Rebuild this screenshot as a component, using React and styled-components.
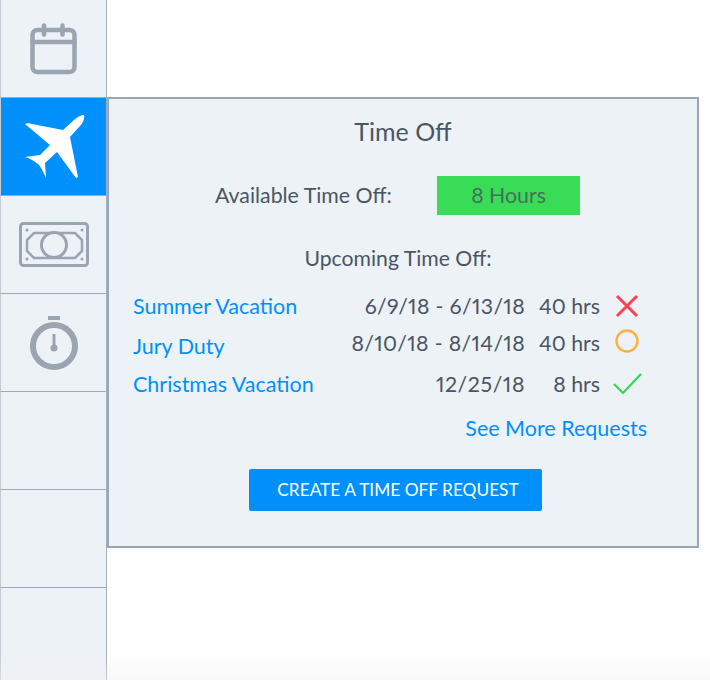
import React from "react";
import styled, { createGlobalStyle } from "styled-components";

const Global = createGlobalStyle`
  html, body { margin: 0; padding: 0; background: #fff; }
  body { font-family: Lato, "Open Sans", sans-serif; color: #4a5565; font-variant-numeric: proportional-nums; }
`;

const Page = styled.div`
  position: relative;
  width: 710px;
  height: 680px;
  overflow: hidden;
  display: flex;
  align-items: flex-start;
  padding-left: 1px;
  box-sizing: border-box;
`;
const Fade = styled.div`
  position: absolute;
  left: 0;
  right: 0;
  bottom: 0;
  height: 26px;
  background: linear-gradient(to bottom, rgba(240,240,240,0), rgba(240,240,240,0.45));
  pointer-events: none;
`;
const Sidebar = styled.nav`
  width: 106px;
  display: flex;
  flex-direction: column;
  box-sizing: border-box;
  flex: none;
`;
const Tab = styled.div`
  height: 98px;
  box-sizing: border-box;
  display: flex;
  align-items: center;
  justify-content: center;
  background: ${p => (p.$active ? "#0090fb" : "#edf2f7")};
  border-right: 1px solid #a5aebb;
  border-left: 1px solid #c5ccd5;
  border-bottom: 1px solid #a0a9b7;
  color: ${p => (p.$active ? "#fff" : "#9ba4b0")};
  margin-left: -1px;
  width: 107px;
`;
const Panel = styled.section`
  margin-top: 97px;
  width: 592px;
  height: 451px;
  box-sizing: border-box;
  background: #edf2f7;
  border: 2px solid #9aa6b8;
  display: flex;
  flex-direction: column;
  align-items: stretch;
  padding: 16px 49px 0 24px;
`;
const Title = styled.h2`
  margin: 0;
  font-size: 25px;
  font-weight: 400;
  line-height: 32px;
  text-align: center;
  padding-left: 25px;
`;
const AvailableRow = styled.div`
  display: flex;
  align-items: center;
  margin-top: 29px;
  padding-left: 82px;
  font-size: 21.3px;
`;
const AvailableLabel = styled.span`
  width: 222px;
  padding-bottom: 2px;
`;
const Hours = styled.div`
  width: 143px;
  height: 39px;
  box-sizing: border-box;
  padding-bottom: 2px;
  background: #39dc56;
  color: #47705a;
  display: flex;
  align-items: center;
  justify-content: center;
`;
const Upcoming = styled.div`
  margin-top: 30px;
  text-align: center;
  font-size: 21.2px;
  line-height: 26px;
  padding-left: 15px;
`;
const Requests = styled.div`
  margin-top: 16px;
  display: flex;
  flex-direction: column;
`;
const Request = styled.div`
  display: grid;
  grid-template-columns: 1fr auto 75px 48px;
  align-items: center;
  height: ${p => p.$h}px;
  font-size: 21.3px;
`;
const Name = styled.a`
  color: #0090fb;
  font-size: 21.5px;
  transform: translateY(${p => p.$dy || 0}px);
`;
const Dates = styled.span`
  text-align: right;
  letter-spacing: ${p => p.$track}px;
`;
const Hrs = styled.span`
  text-align: right;
`;
const Status = styled.span`
  display: flex;
  justify-content: center;
  padding-left: 6px;
  transform: translateY(${p => p.$dy || 0}px);
`;
const More = styled.a`
  align-self: flex-end;
  color: #0090fb;
  font-size: 21.5px;
  line-height: 26px;
  margin: 8px 1px 0 0;
`;
const Cta = styled.button`
  align-self: center;
  margin: 28px 0 0 9px;
  width: 293px;
  height: 42px;
  border: 0;
  padding: 0 0 2px 6px;
  border-radius: 2px;
  background: #0090fb;
  color: #fff;
  font: 400 17.3px Lato, sans-serif;
`;

const Calendar = () => (
  <svg width="48" height="52" viewBox="0 0 48 52" fill="none" stroke="currentColor" strokeWidth="4.5" strokeLinecap="round">
    <rect x="2.5" y="7" width="42" height="42" rx="5" />
    <path d="M2.5 19h42M14 2.5v9M32.5 2.5v9" />
  </svg>
);
const Plane = () => (
  <svg width="64" height="65" viewBox="22 113 64 65" fill="currentColor">
    <path d="M25 123 C27 122 30 122 32 123 L63 129 L74 119 C77 116 81 114 84 114 C85 117 83 122 80 125 L70 136 L78 176 L76 177 L57 151 L45 162 L46 177 C44 172 41 166 38 163 C34 160 29 157 25 156 L40 154 L50 144 Z" />
  </svg>
);
const Money = () => (
  <svg width="72" height="46" viewBox="-1 0 72 46" fill="none" stroke="currentColor" strokeWidth="3">
    <rect x="1.5" y="1.5" width="67" height="42" rx="3" />
    <path d="M15 11 H56 L63 18 V29 L56 36 H15 L8 29 V18 Z" strokeWidth="2.5" />
    <circle cx="35" cy="23" r="12.5" fill="#edf2f7" />
    <g fill="currentColor" stroke="none">
      <circle cx="8" cy="8" r="1.5" /><circle cx="63" cy="8" r="1.5" /><circle cx="8" cy="37" r="1.5" /><circle cx="63" cy="37" r="1.5" />
    </g>
  </svg>
);
const Stopwatch = () => (
  <svg width="50" height="56" viewBox="0 0 50 56" fill="none" stroke="currentColor">
    <rect x="19" y="1" width="12" height="4" fill="currentColor" stroke="none" />
    <circle cx="25" cy="31" r="21" strokeWidth="6" />
    <path d="M25 19v14" strokeWidth="3" />
    <circle cx="25" cy="33" r="3.5" fill="currentColor" stroke="none" />
  </svg>
);
const Cross = () => (
  <svg width="24" height="24" viewBox="0 0 24 24" stroke="#fb4050" strokeWidth="3" fill="none">
    <path d="M2 2 L22 22 M22 2 L2 22" />
  </svg>
);
const Ring = () => (
  <svg width="24" height="24" viewBox="0 0 24 24" stroke="#fbb040" strokeWidth="2.4" fill="none">
    <circle cx="12" cy="12" r="10.5" />
  </svg>
);
const Check = () => (
  <svg width="29" height="22" viewBox="0 0 29 22" stroke="#32d854" strokeWidth="2.2" fill="none">
    <path d="M1 11 L10 20 L28 1" />
  </svg>
);

const rows = [
  { name: "Summer Vacation", dates: "6/9/18 - 6/13/18", track: 0.35, hrs: "40 hrs", icon: <Cross />, h: 38 },
  { name: "Jury Duty", dates: "8/10/18 - 8/14/18", track: 0.35, hrs: "40 hrs", icon: <Ring />, h: 36, dy: 3, iconDy: -2 },
  { name: "Christmas Vacation", dates: "12/25/18", track: 0.6, hrs: "8 hrs", icon: <Check />, h: 46 },
];

export default function App() {
  return (
    <Page>
      <Global />
      <Sidebar>
        <Tab><Calendar /></Tab>
        <Tab $active><Plane /></Tab>
        <Tab><Money /></Tab>
        <Tab><Stopwatch /></Tab>
        <Tab />
        <Tab />
        <Tab />
      </Sidebar>
      <Panel>
        <Title>Time Off</Title>
        <AvailableRow>
          <AvailableLabel>Available Time Off:</AvailableLabel>
          <Hours>8 Hours</Hours>
        </AvailableRow>
        <Upcoming>Upcoming Time Off:</Upcoming>
        <Requests>
          {rows.map(r => (
            <Request key={r.name} $h={r.h}>
              <Name $dy={r.dy}>{r.name}</Name>
              <Dates $track={r.track}>{r.dates}</Dates>
              <Hrs>{r.hrs}</Hrs>
              <Status $dy={r.iconDy}>{r.icon}</Status>
            </Request>
          ))}
        </Requests>
        <More>See More Requests</More>
        <Cta>CREATE A TIME OFF REQUEST</Cta>
      </Panel>
      <Fade />
    </Page>
  );
}
